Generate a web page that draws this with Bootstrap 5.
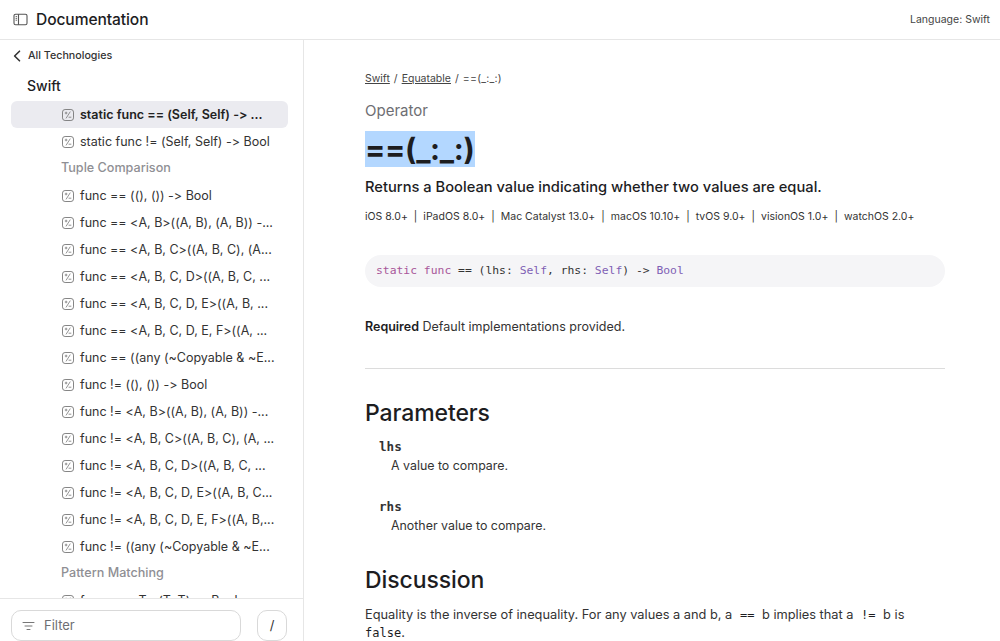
<!DOCTYPE html>
<html lang="en">
<head>
<meta charset="utf-8">
<title>==(_:_:)</title>
<link href="https://cdn.jsdelivr.net/npm/bootstrap@5.3.0/dist/css/bootstrap.min.css" rel="stylesheet">
<style>
html,body{height:100%;overflow:hidden}
body{font-family:Inter,"Liberation Sans",sans-serif;color:#1d1d1f;background:#fff;font-size:14px;font-variant-ligatures:none;font-feature-settings:"calt" 0}
.app-shell{height:641px}
.top-bar{height:40px;padding:0 10px 0 13px;border-bottom:1px solid #e6e6e6;flex:none}
.top-title{font-size:15.6px;font-weight:500;margin-left:8px;letter-spacing:-.1px}
.top-lang{font-size:10.5px;color:#444}
.side-col{width:304px;border-right:1px solid #e6e6e6;flex:none}
.back-row{height:33px;padding-left:13px;font-size:10.7px;font-weight:500;color:#333}
.back-row svg{margin-right:7px}
.tech-name{font-size:14px;font-weight:500;padding-left:27px;height:27px;line-height:28px;margin-bottom:2.5px}
.nav-scroll{overflow:hidden;min-height:0;padding:0 15px 0 11px}
.nav-item-row{height:27px;padding-left:50px;white-space:nowrap;font-size:12.5px;color:#333}
.nav-item-row svg{margin-right:5px;flex:none}
.nav-item-row.is-active{background:#ebebf0;border-radius:6px;font-weight:600;color:#222}
.nav-group{height:27px;padding-left:50px;font-size:12.6px;font-weight:500;color:#8f8f94}
.side-foot{height:43px;border-top:1px solid #e6e6e6;padding:11px 15px 0 11px;gap:16px;flex:none;background:#fff}
.filter-box{width:230px;height:31px;border:1px solid #d9d9d9;border-radius:10px;color:#6e6e73;font-size:13px;padding-left:10px}
.filter-box svg{margin-right:9px}
.slash-box{width:30px;height:31px;border:1px solid #d9d9d9;border-radius:10px;font-size:13px;color:#333}
.main-col{padding:32px 55px 0 61px;min-width:0;overflow:hidden}
.crumbs{font-size:10.5px;color:#444;height:13px;line-height:13px;margin-bottom:16px;white-space:nowrap}
.crumbs a{color:#444}
.crumb-sep{margin:0 4px}
.crumb-last{letter-spacing:.25px}
.eyebrow{font-size:15px;color:#6e6e73;line-height:20px;margin-bottom:10px}
.page-title{font-size:30px;font-weight:700;line-height:36px;margin:0 0 10px;color:#1d1d1f}
.page-title span{background:#b3d7ff;display:inline-block;letter-spacing:-.3px}
.abstract{font-size:14.7px;font-weight:500;line-height:20px;margin:0 0 13px}
.platforms{font-size:10.5px;color:#333;line-height:13px;margin-bottom:32px;white-space:nowrap}
.platforms i{font-style:normal;margin:0 6px}
.decl{height:32px;background:#f5f5f7;border-radius:16px;padding-left:11px;font-family:"DejaVu Sans Mono","Liberation Mono",monospace;font-size:11.37px;color:#333;margin-bottom:31px;white-space:nowrap}
.kw{color:#a8579a}.ty{color:#7f5fb5}
.req{font-size:12.5px;line-height:18px;margin-bottom:32px;color:#333}
.req b{font-weight:600;color:#1d1d1f}
.rule{border-top:1px solid #dcdcdc;margin-bottom:29px}
.sec-title{font-size:23px;font-weight:500;line-height:30px;margin:0 0 11px;letter-spacing:-.1px}
.term{font-family:"DejaVu Sans Mono","Liberation Mono",monospace;font-size:12.6px;font-weight:700;padding-left:14px;line-height:16px;margin-bottom:2px;color:#333}
.term-desc{font-size:12.4px;padding-left:26px;line-height:18px;margin-bottom:24px;color:#333}
.term-desc.last{margin-bottom:30px}
.body-text{font-size:12.8px;line-height:18px;color:#333}
.body-text code{font-family:"DejaVu Sans Mono","Liberation Mono",monospace;font-size:12px;color:#1d1d1f}
.code-gap{margin:0 4px}
</style>
</head>
<body>
<svg width="0" height="0" class="position-absolute"><symbol id="op" viewBox="0 0 14 14"><rect x="1.5" y="1.5" width="11" height="11" rx="2.6" fill="none" stroke="#777" stroke-width=".9"/><path d="M3.8 5h2.6M5.1 3.7v2.6M9.3 3.6 5 10.4M7.6 9.2h2.7" fill="none" stroke="#777" stroke-width=".8"/></symbol></svg>
<div class="app-shell d-flex flex-column">
  <header class="top-bar d-flex align-items-center justify-content-between">
    <div class="d-flex align-items-center">
      <svg width="15" height="13" viewBox="0 0 15 13" fill="none" stroke="#555" stroke-width="1.1"><rect x="1" y="1.2" width="13" height="10.6" rx="1.6"/><path d="M5.5 1.2v10.6"/><path d="M2.6 3.6h1.5M2.6 5.4h1.5M2.6 7.2h1.5" stroke-width=".9"/></svg>
      <span class="top-title">Documentation</span>
    </div>
    <span class="top-lang">Language: Swift</span>
  </header>
  <div class="d-flex flex-grow-1" style="min-height:0">
    <aside class="side-col d-flex flex-column">
      <div class="back-row d-flex align-items-center">
        <svg width="8" height="12" viewBox="0 0 8 12" fill="none" stroke="#333" stroke-width="1.6" stroke-linecap="round" stroke-linejoin="round"><path d="M6.5 1.2 1.6 6l4.9 4.8"/></svg>All Technologies
      </div>
      <div class="tech-name">Swift</div>
      <div class="nav-scroll flex-grow-1">
        <div class="nav-item-row is-active d-flex align-items-center"><svg width="14" height="14"><use href="#op"/></svg>static func == (Self, Self) -&gt; ...</div>
        <div class="nav-item-row d-flex align-items-center"><svg width="14" height="14"><use href="#op"/></svg>static func != (Self, Self) -&gt; Bool</div>
        <div class="nav-group d-flex align-items-center">Tuple Comparison</div>
        <div class="nav-item-row d-flex align-items-center"><svg width="14" height="14"><use href="#op"/></svg>func == ((), ()) -&gt; Bool</div>
        <div class="nav-item-row d-flex align-items-center"><svg width="14" height="14"><use href="#op"/></svg>func == &lt;A, B&gt;((A, B), (A, B)) -...</div>
        <div class="nav-item-row d-flex align-items-center"><svg width="14" height="14"><use href="#op"/></svg>func == &lt;A, B, C&gt;((A, B, C), (A...</div>
        <div class="nav-item-row d-flex align-items-center"><svg width="14" height="14"><use href="#op"/></svg>func == &lt;A, B, C, D&gt;((A, B, C, ...</div>
        <div class="nav-item-row d-flex align-items-center"><svg width="14" height="14"><use href="#op"/></svg>func == &lt;A, B, C, D, E&gt;((A, B, ...</div>
        <div class="nav-item-row d-flex align-items-center"><svg width="14" height="14"><use href="#op"/></svg>func == &lt;A, B, C, D, E, F&gt;((A, ...</div>
        <div class="nav-item-row d-flex align-items-center"><svg width="14" height="14"><use href="#op"/></svg>func == ((any (~Copyable &amp; ~E...</div>
        <div class="nav-item-row d-flex align-items-center"><svg width="14" height="14"><use href="#op"/></svg>func != ((), ()) -&gt; Bool</div>
        <div class="nav-item-row d-flex align-items-center"><svg width="14" height="14"><use href="#op"/></svg>func != &lt;A, B&gt;((A, B), (A, B)) -...</div>
        <div class="nav-item-row d-flex align-items-center"><svg width="14" height="14"><use href="#op"/></svg>func != &lt;A, B, C&gt;((A, B, C), (A, ...</div>
        <div class="nav-item-row d-flex align-items-center"><svg width="14" height="14"><use href="#op"/></svg>func != &lt;A, B, C, D&gt;((A, B, C, ...</div>
        <div class="nav-item-row d-flex align-items-center"><svg width="14" height="14"><use href="#op"/></svg>func != &lt;A, B, C, D, E&gt;((A, B, C...</div>
        <div class="nav-item-row d-flex align-items-center"><svg width="14" height="14"><use href="#op"/></svg>func != &lt;A, B, C, D, E, F&gt;((A, B,...</div>
        <div class="nav-item-row d-flex align-items-center"><svg width="14" height="14"><use href="#op"/></svg>func != ((any (~Copyable &amp; ~E...</div>
        <div class="nav-group d-flex align-items-center">Pattern Matching</div>
        <div class="nav-item-row d-flex align-items-center"><svg width="14" height="14"><use href="#op"/></svg>func ~= &lt;T&gt; (T, T) -&gt; Bool</div>
      </div>
      <div class="side-foot d-flex">
        <div class="filter-box d-flex align-items-center"><svg width="13" height="10" viewBox="0 0 13 10" fill="none" stroke="#777" stroke-width="1" stroke-linecap="round"><path d="M1 1.5h11M3 5h7M5 8.5h3"/></svg>Filter</div>
        <div class="slash-box d-flex align-items-center justify-content-center">/</div>
      </div>
    </aside>
    <main class="main-col flex-grow-1">
      <nav class="crumbs"><a href="#">Swift</a><span class="crumb-sep">/</span><a href="#">Equatable</a><span class="crumb-sep">/</span><span class="crumb-last">==(_:_:)</span></nav>
      <div class="eyebrow">Operator</div>
      <h1 class="page-title"><span>==(_:_:)</span></h1>
      <p class="abstract">Returns a Boolean value indicating whether two values are equal.</p>
      <div class="platforms">iOS 8.0+<i>|</i>iPadOS 8.0+<i>|</i>Mac Catalyst 13.0+<i>|</i>macOS 10.10+<i>|</i>tvOS 9.0+<i>|</i>visionOS 1.0+<i>|</i>watchOS 2.0+</div>
      <div class="decl d-flex align-items-center"><span><span class="kw">static func</span> == (lhs: <span class="ty">Self</span>, rhs: <span class="ty">Self</span>) -&gt; <span class="ty">Bool</span></span></div>
      <p class="req"><b>Required</b> Default implementations provided.</p>
      <div class="rule"></div>
      <h2 class="sec-title">Parameters</h2>
      <div class="term">lhs</div>
      <div class="term-desc">A value to compare.</div>
      <div class="term">rhs</div>
      <div class="term-desc last">Another value to compare.</div>
      <h2 class="sec-title">Discussion</h2>
      <p class="body-text">Equality is the inverse of inequality. For any values a and b, a <code class="code-gap">==</code> b implies that a <code class="code-gap">!=</code> b is <code>false</code>.</p>
    </main>
  </div>
</div>
<script src="https://cdn.jsdelivr.net/npm/bootstrap@5.3.0/dist/js/bootstrap.bundle.min.js"></script>
</body>
</html>
